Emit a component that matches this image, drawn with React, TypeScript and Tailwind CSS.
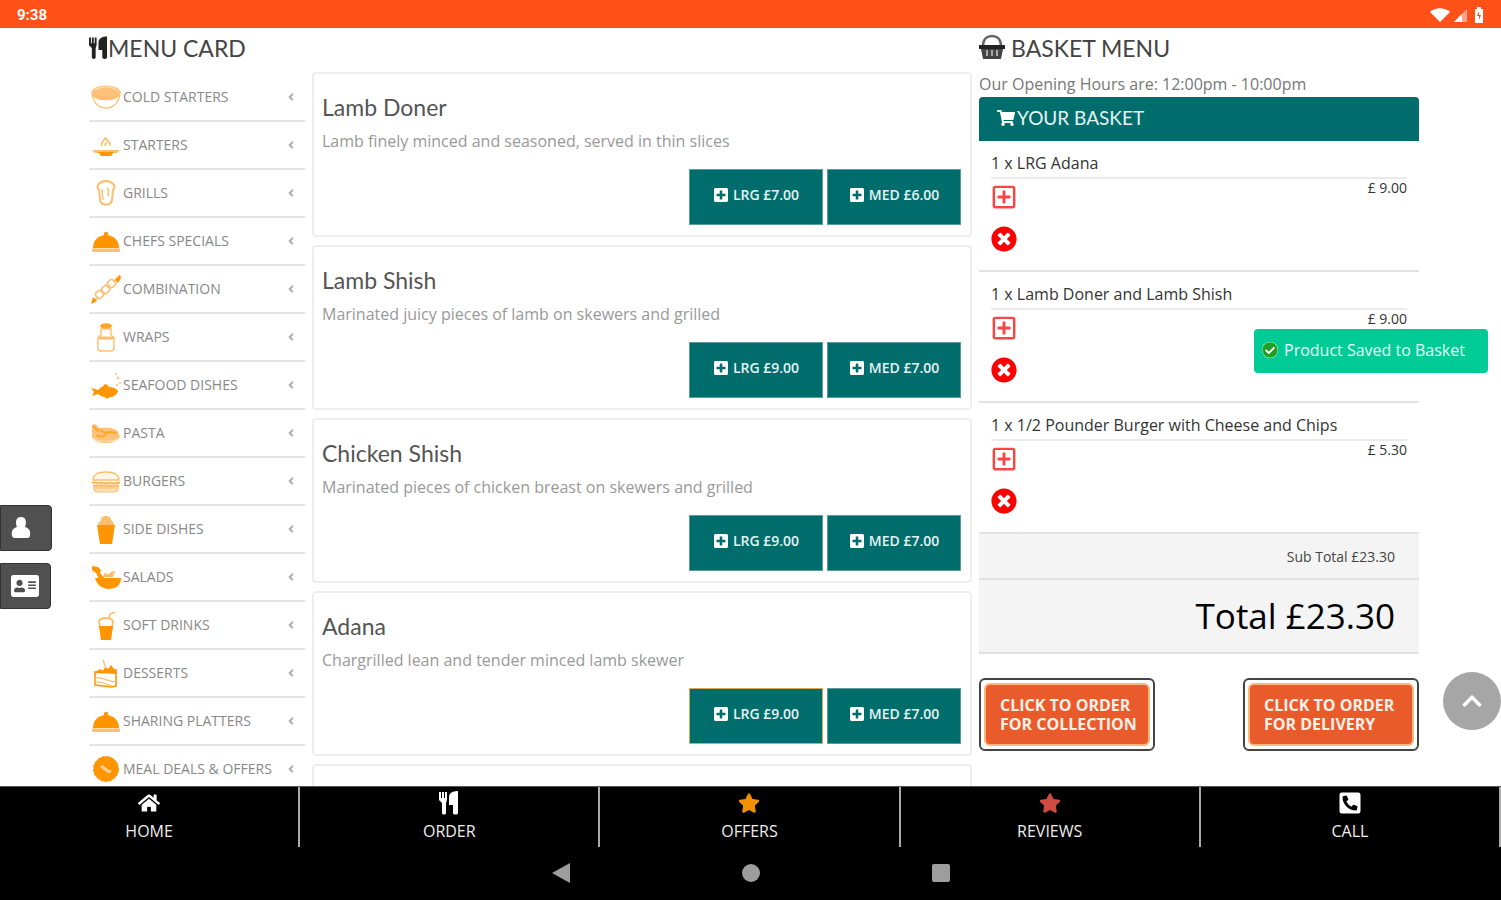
import type { ReactNode } from 'react'
import {
  FaAddressCard,
  FaAngleLeft,
  FaCheckCircle,
  FaChevronUp,
  FaHome,
  FaPhoneSquareAlt,
  FaPlusSquare,
  FaRegPlusSquare,
  FaShoppingCart,
  FaStar,
  FaTimesCircle,
} from 'react-icons/fa'

const ORANGE = '#ff9500'
const LIGHT = '#ffbe6e'
const PALE = '#ffe2bd'

const cloche = (
  <>
    <path d="M2 23C2 15 8 10 15 10s13 5 13 13z" fill={ORANGE} />
    <circle cx="15" cy="9" r="2.2" fill={ORANGE} />
    <rect x="1" y="23.5" width="28" height="3.5" rx="1" fill={LIGHT} />
  </>
)

interface Category {
  name: string
  icon: ReactNode
}

const categories: Category[] = [
  {
    name: 'COLD STARTERS',
    icon: (
      <>
        <path d="M1 10c0 11 6 17 14 17s14-6 14-17" fill="#fff" stroke={LIGHT} strokeWidth="1.3" />
        <ellipse cx="15" cy="10.5" rx="14" ry="6" fill="#ffc27a" />
        <path d="M2 13c4 6 22 6 26 0" fill="none" stroke={LIGHT} strokeWidth="3.5" />
        <path d="M4 9c6-4 16-4 22 0" fill="none" stroke={PALE} strokeWidth="1.2" />
      </>
    ),
  },
  {
    name: 'STARTERS',
    icon: (
      <>
        <path d="M11 17c-2-4 2-5 3-8 4 3 6 5 5 8M14 17c0-3 1-3 2-4" fill="none" stroke={LIGHT} strokeWidth="1.6" />
        <path d="M1 21h28l-3 3H4z" fill={LIGHT} />
        <path d="M7 23h16l-3 4H10z" fill={ORANGE} />
      </>
    ),
  },
  {
    name: 'GRILLS',
    icon: (
      <>
        <path d="M8 13C4 9 9 4 15 4s11 5 7 9l-1 10c-1 6-11 6-12 0z" fill="none" stroke={LIGHT} strokeWidth="2" />
        <path d="M11 12l1 11M16 11c4 3-1 5 2 8" fill="none" stroke={LIGHT} strokeWidth="1.4" />
      </>
    ),
  },
  { name: 'CHEFS SPECIALS', icon: cloche },
  {
    name: 'COMBINATION',
    icon: (
      <>
        <path d="M1 30L29 2" stroke={LIGHT} strokeWidth="1.5" />
        <g fill="#fff" stroke={LIGHT} strokeWidth="1.6">
          <rect x="5" y="18" width="7" height="7" rx="2" transform="rotate(-45 8.500 21.500)" />
          <rect x="11" y="13" width="7" height="7" rx="2" transform="rotate(-45 14.500 16.500)" />
          <rect x="17" y="7" width="7" height="7" rx="2" transform="rotate(-45 20.500 10.500)" />
        </g>
        <path d="M0 31l2-7 4 4zM24 7l5-5 1 3-3 5z" fill={ORANGE} />
      </>
    ),
  },
  {
    name: 'WRAPS',
    icon: (
      <>
        <path d="M10 8h10v6l3 3v10c0 2-1 3-3 3H10c-2 0-3-1-3-3V17l3-3z" fill="none" stroke={LIGHT} strokeWidth="1.4" />
        <path d="M7 17h16" stroke={LIGHT} strokeWidth="3" />
        <ellipse cx="15" cy="5" rx="6" ry="2.8" fill="#ffa62b" />
      </>
    ),
  },
  {
    name: 'SEAFOOD DISHES',
    icon: (
      <>
        <path d="M0 19l7 2c3-3 6-4 7-6 2 0 3 2 4 3 4 0 7 1 9 4-1 4-5 6-8 6l-3 2-2-2c-3 0-5-2-7-3l-6 2 2-4z" fill={ORANGE} />
        <g fill={LIGHT}>
          <circle cx="25" cy="5" r="1" />
          <circle cx="27" cy="9" r="1.2" />
          <circle cx="29" cy="14" r="1" />
          <circle cx="26" cy="16" r="1" />
        </g>
      </>
    ),
  },
  {
    name: 'PASTA',
    icon: (
      <>
        <path d="M1 8c3-2 5 0 7 3 6-1 12-1 18 2l3 7c-3 4-8 6-14 6S3 24 1 20z" fill="#ffc27a" />
        <path d="M2 9l6 6M9 12c3 4 6 5 10 2M13 19c4-5 8-4 13-3M5 18c3 2 6 2 9 0" fill="none" stroke="#ffa62b" strokeWidth="2" />
        <path d="M3 22c6 3 17 3 24 0" fill="none" stroke={PALE} strokeWidth="1" />
      </>
    ),
  },
  {
    name: 'BURGERS',
    icon: (
      <>
        <path d="M2 15C2 9 8 7 15 7s13 2 13 8z" fill="#fff6e8" stroke={LIGHT} strokeWidth="1.4" />
        <path d="M1 18c3-2 5 1 8 0s5 1 8 0 5 1 8 0 3 0 4 0" fill="none" stroke="#ffa93f" strokeWidth="1.6" />
        <rect x="2" y="19.5" width="26" height="3" fill={LIGHT} />
        <path d="M3 23h24c0 3-2 4-4 4H7c-2 0-4-1-4-4z" fill={PALE} stroke={LIGHT} strokeWidth="1.2" />
      </>
    ),
  },
  {
    name: 'SIDE DISHES',
    icon: (
      <>
        <path d="M7 12c0-3 2-3 3-5 0-3 2-4 5-4s5 1 5 4c2 1 3 3 3 5z" fill={LIGHT} />
        <path d="M6 12h18l-3 19H9z" fill={ORANGE} />
      </>
    ),
  },
  {
    name: 'SALADS',
    icon: (
      <>
        <path d="M4 17h26c0 7-5 11-12 11S6 24 4 17z" fill={ORANGE} />
        <path d="M1 5l6 1 3 3-1 3 5 6H8L5 12l-4-3z" fill={ORANGE} />
        <path d="M12 16c1-5 3-5 4-3s4-4 8-3l-2 6z" fill={LIGHT} />
      </>
    ),
  },
  {
    name: 'SOFT DRINKS',
    icon: (
      <>
        <path d="M8 12l1 7h12l1-7c-2-4-12-4-14 0z" fill="none" stroke={LIGHT} strokeWidth="1.8" />
        <path d="M18 9l1-4 5-2" fill="none" stroke={LIGHT} strokeWidth="1.5" />
        <path d="M8 17h14l-2 14H10z" fill={ORANGE} />
      </>
    ),
  },
  {
    name: 'DESSERTS',
    icon: (
      <>
        <path d="M4 15l21-2v16l-4 1-17-2z" fill="#fff" stroke={ORANGE} strokeWidth="1.6" />
        <path d="M3 16l6-4 3 2 2-4 3 2 3-4 3 4 3 5z" fill={ORANGE} />
        <path d="M4 21c7-2 14 4 21 4M4 25c7-1 12 3 17 4" fill="none" stroke={LIGHT} strokeWidth="1.3" />
        <path d="M15 11l-3-8" stroke={LIGHT} strokeWidth="1.3" />
      </>
    ),
  },
  { name: 'SHARING PLATTERS', icon: cloche },
  {
    name: 'MEAL DEALS & OFFERS',
    icon: (
      <>
        <circle cx="15" cy="16" r="12.5" fill={ORANGE} stroke={ORANGE} strokeWidth="1" strokeDasharray="3 1.5" />
        <path d="M10 13l4 3M14 16l4 3M18 18l2 1" stroke="#ffd08f" strokeWidth="3" />
      </>
    ),
  },
]

interface Product {
  name: string
  description: string
  large: string
  medium: string
  highlighted?: boolean
}

const products: Product[] = [
  { name: 'Lamb Doner', description: 'Lamb finely minced and seasoned, served in thin slices', large: '£7.00', medium: '£6.00' },
  { name: 'Lamb Shish', description: 'Marinated juicy pieces of lamb on skewers and grilled', large: '£9.00', medium: '£7.00' },
  { name: 'Chicken Shish', description: 'Marinated pieces of chicken breast on skewers and grilled', large: '£9.00', medium: '£7.00' },
  { name: 'Adana', description: 'Chargrilled lean and tender minced lamb skewer', large: '£9.00', medium: '£7.00', highlighted: true },
]

const basket = [
  { name: '1 x LRG Adana', price: '£ 9.00' },
  { name: '1 x Lamb Doner and Lamb Shish', price: '£ 9.00' },
  { name: '1 x 1/2 Pounder Burger with Cheese and Chips', price: '£ 5.30' },
]

function CutleryIcon({ className }: { className?: string }) {
  return (
    <svg viewBox="0 0 20 24" fill="currentColor" className={className} aria-hidden="true">
      <path d="M0 1h2v6h1V1h2v6h1V1h2v8L7 12v10c0 2-4 2-4 0V12L0 9z" />
      <path d="M19 0v22c0 2-5 2-5 0v-8h-4V6c0-4 4-6 9-6z" />
    </svg>
  )
}

function BasketIcon() {
  return (
    <svg viewBox="0 0 26 26" className="size-[26px]" aria-hidden="true">
      <path d="M4 12C4 5 8 2 13 2s9 3 9 10" fill="none" stroke="#666" strokeWidth="2.5" />
      <path d="M0 11h26v4H0z" fill="#222" />
      <path d="M2 15h22l-2 10H4z" fill="#444" />
      <path d="M8 16v6M13 16v6M18 16v6" stroke="#ccc" strokeWidth="1.5" />
    </svg>
  )
}

function StatusBar() {
  return (
    <header className="flex h-7 shrink-0 items-center justify-between bg-[#ff5118] pr-3.5 pl-[17px] text-white">
      <span className="pt-0.5 font-['Roboto'] text-[15px] leading-7 font-bold">9:38</span>
      <div className="flex items-center gap-1 pt-0.5">
        <svg viewBox="0 0 20 14" className="h-3.5 w-5" fill="currentColor" aria-hidden="true">
          <path d="M0 4C6-1 14-1 20 4L10 14z" />
        </svg>
        <svg viewBox="0 0 13 13" className="size-[13px]" aria-hidden="true">
          <path d="M0 13L13 0v13z" fill="#ffa68a" />
          <path d="M0 13l8-8v8z" fill="#fff" />
        </svg>
        <svg viewBox="0 0 16 16" className="size-4" aria-hidden="true">
          <path d="M6 0h4v2h2v14H4V2h2z" fill="#fff" />
          <path d="M8 4l-2 5h2v4l2-5H8z" fill="#ff5118" />
        </svg>
      </div>
    </header>
  )
}

function MenuCard() {
  return (
    <aside>
      <h2 className="flex h-[46px] items-start pt-1.5 font-['Lato'] text-[23px] leading-7 text-[#444]">
        <CutleryIcon className="mt-0.5 h-6 w-[19px] shrink-0 text-[#222]" />
        MENU CARD
      </h2>
      <ul>
        {categories.map((category) => (
          <li key={category.name} className="h-12 border-b-2 border-[#e4e4e4]">
            <a href="#" className="flex h-full items-center pr-2 pl-0.5 text-sm text-[#888]">
              <svg viewBox="0 0 30 32" className="mr-0.5 h-8 w-[30px] shrink-0" aria-hidden="true">
                {category.icon}
              </svg>
              <span className="grow whitespace-nowrap">{category.name}</span>
              <FaAngleLeft className="size-3 shrink-0 text-[#aaa]" />
            </a>
          </li>
        ))}
      </ul>
    </aside>
  )
}

function ProductCard({ product }: { product: Product }) {
  return (
    <article className="mb-2 rounded-sm border-2 border-[#eee] px-2 pb-2.5">
      <h3 className="pt-[19px] font-['Lato'] text-[23px] leading-7 text-[#555]">{product.name}</h3>
      <p className="pt-2 text-base leading-6 text-[#999]">{product.description}</p>
      <div className="mt-4 flex justify-end gap-1 pr-px">
        <SizeButton label={`LRG ${product.large}`} highlighted={product.highlighted} />
        <SizeButton label={`MED ${product.medium}`} />
      </div>
    </article>
  )
}

function SizeButton({ label, highlighted }: { label: string; highlighted?: boolean }) {
  return (
    <button
      className={`flex h-14 w-[134px] items-center justify-center gap-1 border bg-[#006d6d] pb-1 text-sm font-semibold text-[#e6f2f2] ${
        highlighted ? 'border-[#d9a752]' : 'border-[#5d9c9c]'
      }`}
    >
      <FaPlusSquare className="size-4 text-white" />
      {label}
    </button>
  )
}

function Basket() {
  return (
    <section>
      <h2 className="flex h-[46px] items-start gap-1.5 pt-1.5 font-['Lato'] text-[23px] leading-7 text-[#444]">
        <BasketIcon />
        BASKET MENU
      </h2>
      <p className="h-[23px] text-base leading-5 text-[#777]">Our Opening Hours are: 12:00pm - 10:00pm</p>
      <h3 className="flex h-11 items-center rounded-t-sm bg-[#006d6d] px-4.5 pb-0.5 font-['Lato'] text-[19px] text-[#e6f2f2]">
        <FaShoppingCart className="mr-0.5 size-[18px] text-white" />
        YOUR BASKET
      </h3>
      <ul>
        {basket.map((item) => (
          <li key={item.name} className="h-[131px] border-b-2 border-[#e2e2e2] px-3 pt-2.5">
            <p className="border-b-2 border-[#eaeaea] pb-0.5 text-base leading-6 text-[#333]">{item.name}</p>
            <div className="flex items-start justify-between pt-[5px]">
              <div className="flex flex-col gap-4 text-[#f00]">
                <button aria-label={`Add another ${item.name}`}>
                  <FaRegPlusSquare className="size-[26px] text-[#fb4444]" />
                </button>
                <button aria-label={`Remove ${item.name}`}>
                  <FaTimesCircle className="size-[26px]" />
                </button>
              </div>
              <span className="-mt-1 text-sm leading-4 text-[#333]">{item.price}</span>
            </div>
          </li>
        ))}
      </ul>
      <div className="bg-[#f4f4f4] text-right">
        <p className="h-[46px] border-b-2 border-[#e2e2e2] px-6 text-sm leading-[46px] text-[#444]">Sub Total £23.30</p>
        <p className="h-[74px] border-b-2 border-[#e2e2e2] px-6 text-[35px] leading-[72px] font-medium text-black">
          Total £23.30
        </p>
      </div>
      <div className="mt-6 flex justify-between">
        <OrderButton target="FOR COLLECTION" />
        <OrderButton target="FOR DELIVERY" />
      </div>
    </section>
  )
}

function OrderButton({ target }: { target: string }) {
  return (
    <button className="h-[73px] w-[176px] rounded-md border-2 border-[#444] p-[3px]">
      <span className="flex h-full flex-col justify-center rounded-md border-2 border-[#ffb877] bg-[#ea5b2c] pl-3.5 text-left text-base leading-[19px] font-bold whitespace-nowrap text-[#fff0e8]">
        <span>CLICK TO ORDER</span>
        <span>{target}</span>
      </span>
    </button>
  )
}

const tabs = [
  { name: 'HOME', icon: <FaHome className="size-[22px]" /> },
  { name: 'ORDER', icon: <CutleryIcon className="h-6 w-5" /> },
  { name: 'OFFERS', icon: <FaStar className="size-[22px] text-[#f29100]" /> },
  { name: 'REVIEWS', icon: <FaStar className="size-[22px] text-[#d24b40]" /> },
  { name: 'CALL', icon: <FaPhoneSquareAlt className="size-6" /> },
]

function BottomBar() {
  return (
    <footer className="shrink-0 bg-black">
      <nav className="grid h-[59px] grid-cols-5 border-t border-[#555]">
        {tabs.map((tab) => (
          <a key={tab.name} href="#" className="flex flex-col items-center border-r-2 border-[#aaa] pt-1 text-base leading-8 text-[#eee]">
            <span className="flex h-6 items-center text-white">{tab.icon}</span>
            {tab.name}
          </a>
        ))}
      </nav>
      <div className="flex h-[55px] items-center justify-center gap-[172px]">
        <button aria-label="Back">
          <svg viewBox="0 0 18 20" className="h-5 w-[18px]" aria-hidden="true">
            <path d="M18 0v20L0 10z" fill="#9d9d9d" />
          </svg>
        </button>
        <button aria-label="Home" className="size-[18px] rounded-full bg-[#9d9d9d]" />
        <button aria-label="Recent apps" className="size-[18px] rounded-xs bg-[#9d9d9d]" />
      </div>
    </footer>
  )
}

export default function App() {
  return (
    <div className="relative flex h-screen flex-col bg-white font-['Open_Sans',sans-serif]">
      <StatusBar />
      <main className="grid min-h-0 grow grid-cols-[216fr_660fr_440fr] gap-[7px] overflow-hidden pr-[82px] pl-[89px]">
        <MenuCard />
        <section className="pt-11">
          {products.map((product) => (
            <ProductCard key={product.name} product={product} />
          ))}
          <div className="h-14 rounded-sm border-2 border-[#eee]" />
        </section>
        <Basket />
      </main>
      <BottomBar />

      {/* Floating side tabs */}
      <div className="absolute top-[505px] left-0 flex flex-col items-start gap-3 text-white">
        <button aria-label="Account" className="flex h-[46px] w-[52px] items-center rounded-r-sm border border-[#333] bg-[#505050] pl-2.5">
          <svg viewBox="0 0 20 22" className="h-[22px] w-5" fill="currentColor" aria-hidden="true">
            <path d="M10 0c5 0 6 5 4 10 4 1 6 4 5 9-1 2-2 2-4 2H5c-2 0-3 0-4-2-1-5 1-8 5-9C4 5 5 0 10 0z" />
          </svg>
        </button>
        <button aria-label="Contact details" className="flex h-[46px] w-[51px] items-center rounded-r-sm border border-[#333] bg-[#505050] pl-2.5">
          <FaAddressCard className="size-7" />
        </button>
      </div>

      {/* Toast */}
      <div role="status" className="absolute top-[329px] right-[13px] flex h-11 w-[234px] items-center gap-1.5 rounded-sm bg-[#00cb97] px-2 pb-0.5 text-base font-medium whitespace-nowrap text-[#e6fff6]">
        <FaCheckCircle className="size-4 shrink-0 rounded-full bg-white text-[#1fa022]" />
        Product Saved to Basket
      </div>

      <button aria-label="Back to top" className="absolute top-[672px] right-0 flex size-[58px] items-center justify-center rounded-full bg-[#a6a6a6] text-white">
        <FaChevronUp className="size-[22px]" />
      </button>
    </div>
  )
}
